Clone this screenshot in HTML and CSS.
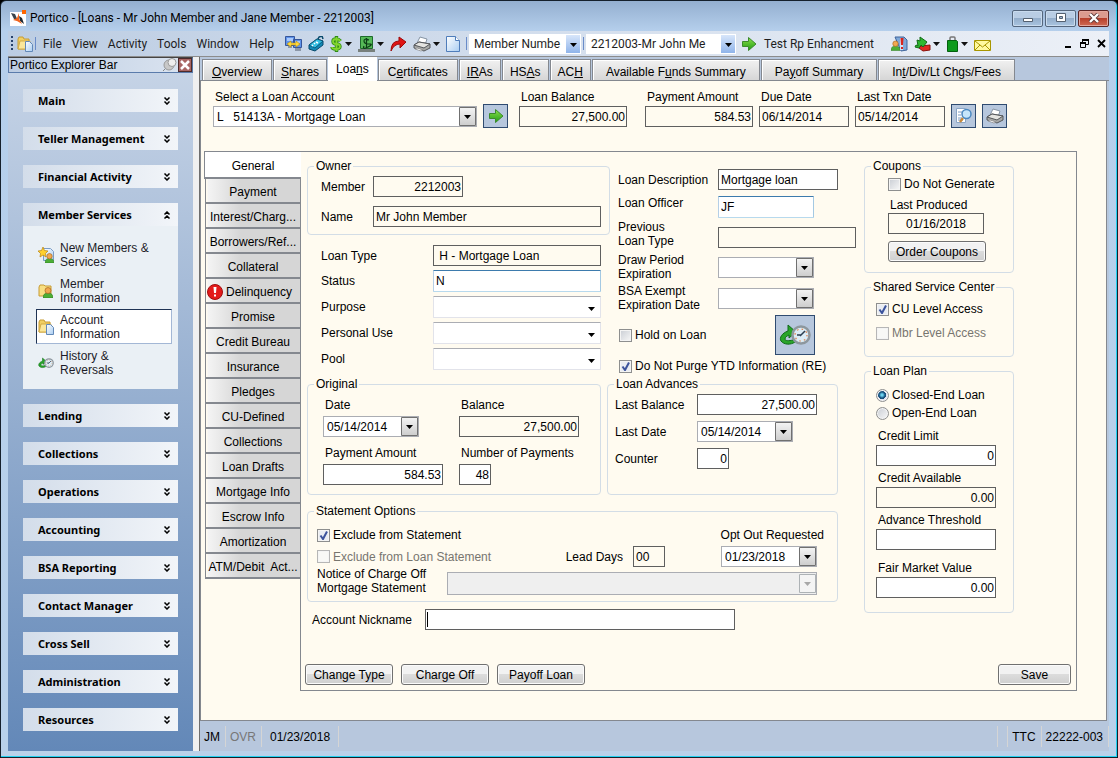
FILE: index.html
```html
<!DOCTYPE html>
<html lang="en">
<head>
    <meta charset="utf-8">
    <title>Portico - Loans</title>
    <link rel="stylesheet" href="styles.css">
</head>
<body>
    <!-- shared icons -->
    <svg class="defs" width="0" height="0" aria-hidden="true">
        <linearGradient id="green" x1="0" y1="0" x2="0" y2="1">
            <stop offset="0" stop-color="#8be04a"/>
            <stop offset="1" stop-color="#1f9c14"/>
        </linearGradient>
        <linearGradient id="paper" x1="0" y1="0" x2="1" y2="1">
            <stop offset="0" stop-color="#ffffff"/>
            <stop offset="1" stop-color="#a9cdf2"/>
        </linearGradient>
        <symbol id="folder" viewBox="0 0 16 16">
            <path d="M1 3l1-2h4l1 2h5v10H1z" fill="#f0cf62" stroke="#c79c35"/>
            <path d="M1 13L3 5h10l-2 8z" fill="#fbe79a" stroke="#d4ab45"/>
            <path d="M8.500 5.500h4l3 3v7h-7z" fill="url(#paper)" stroke="#6289b8"/>
        </symbol>
        <symbol id="go" viewBox="0 0 16 16">
            <path d="M1.500 5.500h6v-4l7.500 6.500-7.500 6.500v-4h-6z" fill="url(#green)" stroke="#3c8a2c"/>
        </symbol>
        <symbol id="person" viewBox="0 0 10 11">
            <path d="M0 11q0-5 5-5t5 5z" fill="#4cae35" stroke="#2b7a1e" stroke-width=".6"/>
            <circle cx="5" cy="3.500" r="3" fill="#f0a850" stroke="#a8651c" stroke-width=".7"/>
        </symbol>
        <symbol id="history" viewBox="0 0 32 22">
            <path d="M9 7C3 9 0 14 2 17c3 4 10 4 14 1l-2-2c-4 1-8 1-8-1s2-3 4-4v3l7-6-8-7z" fill="#2aa52a" stroke="#0f6a18"/>
            <circle cx="22" cy="11" r="8.500" fill="#dcecf5" stroke="#8d979e" stroke-width="2.500"/>
            <circle cx="22" cy="11" r="6" fill="none" stroke="#e07a40" stroke-width="1.200" stroke-dasharray="1.500 3.200"/>
            <path d="M21 12l5-5M22 11h-4" stroke="#2b3e50" stroke-width="1.500"/>
        </symbol>
        <symbol id="printer" viewBox="0 0 18 16">
            <path d="M4 7l3-6 7 2-2 6z" fill="#fff" stroke="#8694a4"/>
            <path d="M1 9l5-3 11 2v4l-6 3-10-3z" fill="#a9aaa8" stroke="#55585c"/>
            <path d="M1 9l5-3 11 2-6 4z" fill="#e4e4e1" stroke="#55585c"/>
            <path d="M4 12l6 2-2 1-6-2z" fill="#fff" stroke="#777" stroke-width=".6"/>
        </symbol>
        <symbol id="down" viewBox="0 0 7 4"><path d="M0 0h7L3.500 4z" fill="#111"/></symbol>
        <symbol id="chevrons" viewBox="0 0 8 8">
            <path d="M1.500 .5L4 3 6.500 .5M1.500 4.500L4 7l2.500-2.500" fill="none" stroke="#000" stroke-width="1.500"/>
        </symbol>
    </svg>

    <div class="window">
        <div class="titlebar">
            <svg width="16" height="16" viewBox="0 0 16 16">
                <path d="M0 2h16v14H0z" fill="#fff"/>
                <path d="M1 3l4 1 3 7-4-2z" fill="#39434c"/>
                <path d="M9 6l3 2 2 6-4-3z" fill="#202a33"/>
                <path d="M9 3v6l3 5-5-3-4-1 4-2z" fill="#f1631c"/>
                <path d="M12 0h4v4h-4z" fill="#f60"/>
            </svg>
            <h1>Portico - [Loans - Mr John Member and Jane Member - 2212003]</h1>
            <div class="win-buttons">
                <button type="button" aria-label="Minimize"><svg width="12" height="10" viewBox="0 0 12 10"><path d="M1.500 5.500h9v3h-9z" fill="#fff" stroke="#536070"/></svg></button>
                <button type="button" aria-label="Maximize"><svg width="12" height="10" viewBox="0 0 12 10"><path d="M1.500 .5h9v8h-9z" fill="#fff" stroke="#536070"/><path d="M4.500 3.500h3v2h-3z" fill="#9fb6d0" stroke="#536070"/></svg></button>
                <button type="button" class="close" aria-label="Close"><svg width="12" height="10" viewBox="0 0 12 10"><path d="M2 1l8 8M10 1L2 9" stroke="#5b3535" stroke-width="4"/><path d="M2 1l8 8M10 1L2 9" stroke="#fff" stroke-width="2.400"/></svg></button>
            </div>
        </div>

        <div class="toolbar">
            <span class="grip"></span>
            <svg width="16" height="16"><use href="#folder"/></svg>
            <span class="sep"></span>
            <nav class="menu">
                <button type="button">File</button>
                <button type="button">View</button>
                <button type="button">Activity</button>
                <button type="button">Tools</button>
                <button type="button">Window</button>
                <button type="button">Help</button>
            </nav>
            <div class="tools">
                <button type="button" aria-label="Transfer"><svg width="17" height="16" viewBox="0 0 17 16">
                    <path d="M.5 .5h9v9h-9zM8.500 3.500h8v8h-8z" fill="#5f93ea" stroke="#36569b"/>
                    <path d="M2 2h6v3H2zM10 5h5v2h-5z" fill="#a9c9fb"/>
                    <path d="M3 10h4v2H3zM10 12h6v3h-6z" fill="#8b97a8"/>
                    <path d="M2 8l4-3v2h5V5l4 3-4 3V9H6v2z" fill="#ffd93b" stroke="#b98d0c" stroke-width=".6"/>
                </svg></button>
                <button type="button" aria-label="Calculator"><svg width="16" height="16" viewBox="0 0 16 16">
                    <path d="M1 9l8-6 6 2v4l-8 6-6-2z" fill="#1389b5" stroke="#08496a"/>
                    <path d="M1 9l8-6 6 2-8 7z" fill="#35bfe2" stroke="#08496a" stroke-width=".8"/>
                    <path d="M4 9l1 1M6 7l1 1M8 6l2 1" stroke="#fff" stroke-width="1.500"/>
                    <path d="M10 3l1-2 3-1 1 3" fill="none" stroke="#08496a" stroke-width="1.500"/>
                </svg></button>
                <button type="button" class="drop" aria-label="Money"><svg width="13" height="16" viewBox="0 0 13 16">
                    <path d="M10.500 5Q9 3 6 3T3 5.500t3.500 2.500T10 10.500 6 13 2 11M6.500 0v16" fill="none" stroke="#2d8a17" stroke-width="3.400"/>
                    <path d="M10.500 5Q9 3 6 3T3 5.500t3.500 2.500T10 10.500 6 13 2 11M6.500 1v14" fill="none" stroke="#83d52f" stroke-width="1.800"/>
                </svg><svg width="7" height="4"><use href="#down"/></svg></button>
                <button type="button" class="drop" aria-label="Cash"><svg width="17" height="16" viewBox="0 0 17 16">
                    <path d="M2.500 .5h12v12h-12z" fill="#55b957" stroke="#1e6b2b"/>
                    <path d="M0 13h17v3H0z" fill="#78807d"/>
                    <path d="M11 4Q6 2 6 5t5 3-1 3-4-1M8.500 2v10" fill="none" stroke="#0b3c15" stroke-width="1.200"/>
                </svg><svg width="7" height="4"><use href="#down"/></svg></button>
                <button type="button" aria-label="Forward"><svg width="17" height="16" viewBox="0 0 17 16">
                    <path d="M1 15Q1 5 9 5V1l7 5-6 6V8Q4 8 1 15z" fill="#e01414" stroke="#9c0a0a"/>
                </svg></button>
                <button type="button" class="drop" aria-label="Print"><svg width="18" height="16"><use href="#printer"/></svg><svg width="7" height="4"><use href="#down"/></svg></button>
                <button type="button" aria-label="New"><svg width="14" height="16" viewBox="0 0 14 16">
                    <path d="M.5 .5h9l4 4v11H.5z" fill="url(#paper)" stroke="#4f7dbb"/>
                    <path d="M9.500 .5v4h4" fill="#fff" stroke="#4f7dbb"/>
                </svg></button>
            </div>
            <span class="sep"></span>
            <select class="tool-select kind" aria-label="Search by"><option>Member Numbe</option></select>
            <span class="sep"></span>
            <select class="tool-select member" aria-label="Member"><option>2212003-Mr John Me</option></select>
            <button type="button" class="test"><svg width="16" height="16"><use href="#go"/></svg>Test Rp Enhancment</button>
            <div class="tools tools-end">
                <button type="button" aria-label="Alerts"><svg width="17" height="16" viewBox="0 0 17 16">
                    <path d="M4 1h9l3 3v10l-6 1z" fill="#7fa8d8" stroke="#41659b"/>
                    <path d="M9 2h3v12H9z" fill="#cfe0f5"/>
                    <path d="M9.500 2h3l-.5 7h-2zM10 11h2v2h-2z" fill="#d9261c"/>
                    <use href="#person" x="0" y="3" width="9" height="13"/>
                </svg></button>
                <button type="button" class="drop" aria-label="Exchange"><svg width="17" height="16" viewBox="0 0 17 16">
                    <path d="M5 12l2-2 9-1v5l-7 1z" fill="#df2a22" stroke="#8c120c"/>
                    <path d="M1 11l1-2 2 1-1-6 3 1V1l7 5-4 5-2-2-2 3z" fill="#2fb82f" stroke="#126a16"/>
                </svg><svg width="7" height="4"><use href="#down"/></svg></button>
                <button type="button" class="drop" aria-label="Bag"><svg width="13" height="16" viewBox="0 0 13 16">
                    <path d="M4 5V2q0-1 1-1h3q1 0 1 1v3" fill="none" stroke="#777" stroke-width="1.500"/>
                    <path d="M1.500 4.500h9l1 1v10h-10z" fill="#0c9a1c" stroke="#04600e"/>
                </svg><svg width="7" height="4"><use href="#down"/></svg></button>
                <button type="button" aria-label="Mail"><svg width="17" height="16" viewBox="0 0 17 16">
                    <path d="M.5 4.500h16v10H.5z" fill="#fff9a0" stroke="#a89600"/>
                    <path d="M1 5l7.500 6L16 5M1 14l5-5M16 14l-5-5" fill="none" stroke="#a89600"/>
                </svg></button>
            </div>
            <div class="child-buttons">
                <button type="button" aria-label="Minimize form"><svg width="7" height="9" viewBox="0 0 7 9"><path d="M0 7h6v2H0z"/></svg></button>
                <button type="button" aria-label="Restore form"><svg width="9" height="9" viewBox="0 0 9 9"><path d="M2.500 3V1h6v4.500H6M.5 4h5v4.500h-5z" fill="none" stroke="#000"/><path d="M2 1h7M0 4h6" stroke="#000" stroke-width="2"/></svg></button>
                <button type="button" aria-label="Close form"><svg width="9" height="9" viewBox="0 0 9 9"><path d="M1 1l7 7M8 1L1 8" stroke="#000" stroke-width="1.800"/></svg></button>
            </div>
        </div>

        <div class="client">
            <!-- explorer bar -->
            <div class="explorer">
                <div class="explorer-head">
                    <h2>Portico Explorer Bar</h2>
                    <svg width="15" height="14" viewBox="0 0 15 14">
                        <path d="M1 13l5-5" stroke="#888"/>
                        <ellipse cx="7" cy="7" rx="5" ry="5" fill="#c8c8c8" stroke="#999"/>
                        <ellipse cx="10" cy="4.500" rx="4" ry="4" fill="#eee" stroke="#999"/>
                    </svg>
                    <button type="button" aria-label="Close bar"><svg width="10" height="10" viewBox="0 0 10 10"><path d="M1 1l8 8M9 1L1 9" stroke="#fff" stroke-width="2.500"/></svg></button>
                </div>
                <div class="sections">
                    <button type="button" class="section">Main<svg width="8" height="8"><use href="#chevrons"/></svg></button>
                    <button type="button" class="section">Teller Management<svg width="8" height="8"><use href="#chevrons"/></svg></button>
                    <button type="button" class="section">Financial Activity<svg width="8" height="8"><use href="#chevrons"/></svg></button>
                    <div>
                        <button type="button" class="section open">Member Services<svg width="8" height="8"><use href="#chevrons"/></svg></button>
                        <div class="links">
                            <a href="#"><svg width="16" height="16" viewBox="0 0 16 16">
                                <path d="M5.500 1.500h7l3 3v9h-10z" fill="url(#paper)" stroke="#7b9cc5"/>
                                <path d="M5 0l1.500 3.500L10 4 7.500 6.500 8 10 5 8l-3 2 .5-3.500L0 4l3.500-.5z" fill="#ffd02e" stroke="#b98310" stroke-width=".7"/>
                                <use href="#person" x="7" y="6" width="9" height="10"/>
                            </svg><span>New Members &amp;<br>Services</span></a>
                            <a href="#"><svg width="16" height="16" viewBox="0 0 16 16">
                                <path d="M1 4l1-2h4l1 1h6v10H1z" fill="#f8df82" stroke="#c79c35"/>
                                <use href="#person" x="5" y="4" width="10" height="11"/>
                            </svg><span>Member<br>Information</span></a>
                            <a href="#" class="current"><svg width="16" height="16"><use href="#folder"/></svg><span>Account<br>Information</span></a>
                            <a href="#"><svg width="16" height="16"><use href="#history"/></svg><span>History &amp;<br>Reversals</span></a>
                        </div>
                    </div>
                    <button type="button" class="section">Lending<svg width="8" height="8"><use href="#chevrons"/></svg></button>
                    <button type="button" class="section">Collections<svg width="8" height="8"><use href="#chevrons"/></svg></button>
                    <button type="button" class="section">Operations<svg width="8" height="8"><use href="#chevrons"/></svg></button>
                    <button type="button" class="section">Accounting<svg width="8" height="8"><use href="#chevrons"/></svg></button>
                    <button type="button" class="section">BSA Reporting<svg width="8" height="8"><use href="#chevrons"/></svg></button>
                    <button type="button" class="section">Contact Manager<svg width="8" height="8"><use href="#chevrons"/></svg></button>
                    <button type="button" class="section">Cross Sell<svg width="8" height="8"><use href="#chevrons"/></svg></button>
                    <button type="button" class="section">Administration<svg width="8" height="8"><use href="#chevrons"/></svg></button>
                    <button type="button" class="section">Resources<svg width="8" height="8"><use href="#chevrons"/></svg></button>
                </div>
            </div>

            <main class="main">
                <div class="tabs">
                    <button type="button"><u>O</u>verview</button>
                    <button type="button" class="narrow"><u>S</u>hares</button>
                    <button type="button" class="active">Loa<u>n</u>s</button>
                    <button type="button">C<u>e</u>rtificates</button>
                    <button type="button" class="narrow"><u>I</u><u>R</u>As</button>
                    <button type="button" class="narrow">HS<u>A</u>s</button>
                    <button type="button" class="narrow">AC<u>H</u></button>
                    <button type="button" class="wide">Available F<u>u</u>nds Summary</button>
                    <button type="button" class="wide">Pa<u>y</u>off Summary</button>
                    <button type="button" class="wide">In<u>t</u>/Div/Lt Chgs/Fees</button>
                </div>

                <form class="page">
                    <div class="account">
                        <div class="field picker">
                            <label for="account">Select a Loan Account</label>
                            <select id="account"><option>L &nbsp; 51413A - Mortgage Loan</option></select>
                        </div>
                        <button type="button" class="icon-button" aria-label="Go"><svg width="16" height="16"><use href="#go"/></svg></button>
                        <div class="field amount first">
                            <label for="balance">Loan Balance</label>
                            <input id="balance" class="num" value="27,500.00" readonly>
                        </div>
                        <div class="field amount">
                            <label for="payment">Payment Amount</label>
                            <input id="payment" class="num" value="584.53" readonly>
                        </div>
                        <div class="field date">
                            <label for="due">Due Date</label>
                            <input id="due" value="06/14/2014" readonly>
                        </div>
                        <div class="field date">
                            <label for="txn">Last Txn Date</label>
                            <input id="txn" value="05/14/2014" readonly>
                        </div>
                        <button type="button" class="icon-button" aria-label="Preview"><svg width="16" height="16" viewBox="0 0 16 16">
                            <path d="M.5 .5h9v14h-9z" fill="#fff" stroke="#8aa5c6"/>
                            <path d="M2 4h4M2 7h3M2 10h4M2 12h5" stroke="#7d9cc4"/>
                            <path d="M7 10l-3 4" stroke="#c78a3c" stroke-width="2.500"/>
                            <circle cx="10.500" cy="6" r="4.500" fill="#c6e6fb" stroke="#4b88c0" stroke-width="1.500"/>
                        </svg></button>
                        <button type="button" class="icon-button" aria-label="Print"><svg width="18" height="16"><use href="#printer"/></svg></button>
                    </div>

                    <div class="detail">
                        <div class="side-tabs">
                            <button type="button" class="active">General</button>
                            <button type="button">Payment</button>
                            <button type="button">Interest/Charg...</button>
                            <button type="button">Borrowers/Ref...</button>
                            <button type="button">Collateral</button>
                            <button type="button" class="alert"><svg width="16" height="16" viewBox="0 0 16 16">
                                <circle cx="8" cy="8" r="7.500" fill="#e31b1b" stroke="#a30d0d"/>
                                <path d="M6.500 3h3L9 9H7zM7 10.500h2v2H7z" fill="#fff"/>
                            </svg>Delinquency</button>
                            <button type="button">Promise</button>
                            <button type="button">Credit Bureau</button>
                            <button type="button">Insurance</button>
                            <button type="button">Pledges</button>
                            <button type="button">CU-Defined</button>
                            <button type="button">Collections</button>
                            <button type="button">Loan Drafts</button>
                            <button type="button">Mortgage Info</button>
                            <button type="button">Escrow Info</button>
                            <button type="button">Amortization</button>
                            <button type="button">ATM/Debit&nbsp; Act...</button>
                        </div>

                        <div class="panel">
                            <div class="columns">
                                <div class="loan">
                                    <div class="top">
                                        <div class="left">
                                            <fieldset class="owner">
                                                <legend>Owner</legend>
                                                <label for="member">Member</label>
                                                <input id="member" class="num w-member" value="2212003" readonly>
                                                <label for="name">Name</label>
                                                <input id="name" value="Mr John Member" readonly>
                                            </fieldset>
                                            <div class="types">
                                                <label for="type">Loan Type</label>
                                                <input id="type" value=" H - Mortgage Loan" readonly>
                                                <label for="status">Status</label>
                                                <input id="status" class="soft" value="N">
                                                <label for="purpose">Purpose</label>
                                                <select id="purpose" class="flat"><option></option></select>
                                                <label for="use">Personal Use</label>
                                                <select id="use" class="flat"><option></option></select>
                                                <label for="pool">Pool</label>
                                                <select id="pool" class="flat"><option></option></select>
                                            </div>
                                        </div>
                                        <div class="middle">
                                            <div class="line">
                                                <label for="desc">Loan Description</label>
                                                <input id="desc" class="w-money" value="Mortgage loan">
                                            </div>
                                            <div class="line officer">
                                                <label for="officer">Loan Officer</label>
                                                <input id="officer" class="soft w-date" value="JF">
                                            </div>
                                            <div class="line previous">
                                                <label for="previous">Previous<br>Loan Type</label>
                                                <input id="previous" class="w-previous" readonly>
                                            </div>
                                            <div class="line two">
                                                <label for="draw">Draw Period<br>Expiration</label>
                                                <select id="draw" class="w-date"><option></option></select>
                                            </div>
                                            <div class="line two">
                                                <label for="bsa">BSA Exempt<br>Expiration Date</label>
                                                <select id="bsa" class="w-date"><option></option></select>
                                            </div>
                                            <div class="hold">
                                                <label class="check"><input type="checkbox">Hold on Loan</label>
                                                <button type="button" class="icon-button big" aria-label="History"><svg width="32" height="22"><use href="#history"/></svg></button>
                                            </div>
                                            <label class="check"><input type="checkbox" checked>Do Not Purge YTD Information (RE)</label>
                                        </div>
                                    </div>

                                    <div class="boxes">
                                        <fieldset class="original">
                                            <legend>Original</legend>
                                            <div class="field">
                                                <label for="odate">Date</label>
                                                <select id="odate" class="w-date"><option>05/14/2014</option></select>
                                            </div>
                                            <div class="field">
                                                <label for="obalance">Balance</label>
                                                <input id="obalance" class="num w-money" value="27,500.00" readonly>
                                            </div>
                                            <div class="field">
                                                <label for="opayment">Payment Amount</label>
                                                <input id="opayment" class="num w-money" value="584.53">
                                            </div>
                                            <div class="field">
                                                <label for="count">Number of Payments</label>
                                                <input id="count" class="num w-count" value="48">
                                            </div>
                                        </fieldset>
                                        <fieldset class="advances">
                                            <legend>Loan Advances</legend>
                                            <label for="abalance">Last Balance</label>
                                            <input id="abalance" class="num w-money" value="27,500.00">
                                            <label for="adate">Last Date</label>
                                            <select id="adate" class="w-date"><option>05/14/2014</option></select>
                                            <label for="counter">Counter</label>
                                            <input id="counter" class="num w-count" value="0">
                                        </fieldset>
                                    </div>

                                    <fieldset class="statement">
                                        <legend>Statement Options</legend>
                                        <div class="row">
                                            <label class="check"><input type="checkbox" checked>Exclude from Statement</label>
                                            <label for="optout" class="optout">Opt Out Requested</label>
                                        </div>
                                        <div class="row second">
                                            <label class="check off"><input type="checkbox" disabled>Exclude from Loan Statement</label>
                                            <label for="lead" class="lead">Lead Days</label>
                                            <input id="lead" class="w-count" value="00" readonly>
                                            <select id="optout" class="w-date"><option>01/23/2018</option></select>
                                        </div>
                                        <div class="row notice">
                                            <label for="notice">Notice of Charge Off<br>Mortgage Statement</label>
                                            <select id="notice" disabled><option></option></select>
                                        </div>
                                    </fieldset>
                                    <div class="nickname">
                                        <label for="nick">Account Nickname</label>
                                        <input id="nick" class="caret">
                                    </div>
                                </div>

                                <div class="plans">
                                    <fieldset class="coupons">
                                        <legend>Coupons</legend>
                                        <label class="check"><input type="checkbox">Do Not Generate</label>
                                        <div class="field">
                                            <label for="produced">Last Produced</label>
                                            <input id="produced" class="w-date" value="01/16/2018" readonly>
                                        </div>
                                        <button type="button" class="push">Order Coupons</button>
                                    </fieldset>
                                    <fieldset class="shared">
                                        <legend>Shared Service Center</legend>
                                        <label class="check"><input type="checkbox" checked>CU Level Access</label>
                                        <label class="check off"><input type="checkbox" disabled>Mbr Level Access</label>
                                    </fieldset>
                                    <fieldset class="plan">
                                        <legend>Loan Plan</legend>
                                        <label class="check"><input type="radio" name="plan" checked>Closed-End Loan</label>
                                        <label class="check"><input type="radio" name="plan">Open-End Loan</label>
                                        <div class="field first">
                                            <label for="limit">Credit Limit</label>
                                            <input id="limit" class="num w-money" value="0">
                                        </div>
                                        <div class="field">
                                            <label for="available">Credit Available</label>
                                            <input id="available" class="num w-money" value="0.00" readonly>
                                        </div>
                                        <div class="field">
                                            <label for="threshold">Advance Threshold</label>
                                            <input id="threshold" class="num w-money">
                                        </div>
                                        <div class="field last">
                                            <label for="market">Fair Market Value</label>
                                            <input id="market" class="num w-money" value="0.00">
                                        </div>
                                    </fieldset>
                                </div>
                            </div>

                            <div class="actions">
                                <button type="button" class="push">Change Type</button>
                                <button type="button" class="push">Charge Off</button>
                                <button type="button" class="push">Payoff Loan</button>
                                <button type="button" class="push save">Save</button>
                            </div>
                        </div>
                    </div>
                </form>

                <footer class="status">
                    <span>JM</span>
                    <span class="dim">OVR</span>
                    <span class="today">01/23/2018</span>
                    <span class="fill"></span>
                    <span></span>
                    <span>TTC</span>
                    <span>22222-003</span>
                </footer>
            </main>
        </div>
    </div>
</body>
</html>
```

FILE: styles.css
```css
* {
    box-sizing: border-box;
}
body {
    margin: 0;
    background: #000;
    color: #000;
    font: 12px/14px "Liberation Sans", Arial, sans-serif;
}
button, input, select {
    margin: 0;
    font: inherit;
    color: inherit;
    border-radius: 0;
}
button {
    padding: 0;
    border: 0;
    background: none;
    white-space: nowrap;
}
h1, h2 {
    margin: 0;
    font-weight: normal;
}
svg {
    display: block;
    flex: none;
}
.defs {
    position: absolute;
}

/* window frame */
.window {
    min-height: 100vh;
    display: flex;
    flex-direction: column;
    padding: 1px 8px 6px 7px;
    border: 1px solid #15202c;
    border-radius: 6px 6px 0 0;
    box-shadow: inset -1px -1px #21d0f0;
    background: linear-gradient(#94afd0, #b5cfec 30px, #b9d1ea);
}
.titlebar {
    height: 29px;
    display: flex;
    align-items: center;
    gap: 4px;
    padding: 3px 0 0 2px;
}
.titlebar h1 {
    flex: 1;
    font: 12px/16px Roboto, "Open Sans", sans-serif;
}
.win-buttons {
    display: flex;
    gap: 2px;
}
.win-buttons button {
    width: 31px;
    height: 17px;
    display: flex;
    align-items: center;
    justify-content: center;
    border: 1px solid #55677e;
    border-radius: 2px;
    box-shadow: inset 0 0 0 1px #c9dbee;
    background: linear-gradient(#b9cde4 50%, #94aecb 50%, #a9c4e0);
}
.win-buttons .close {
    border-color: #5c2524;
    box-shadow: inset 0 0 0 1px #e3a79d;
    background: linear-gradient(#dc9b8f 50%, #b8402c 50%, #cf6a55);
}

/* menu and tool strip */
.toolbar {
    height: 26px;
    display: flex;
    align-items: center;
    border-bottom: 1px solid #8c8c8c;
    background: linear-gradient(90deg, #bccde3, #ecf0f7);
    font: 12px/16px Roboto, "Open Sans", sans-serif;
    color: #1e1e1e;
}
.grip {
    width: 2px;
    height: 15px;
    margin: 0 4px 0 3px;
    background: repeating-linear-gradient(#27416b 0 2px, transparent 2px 4px);
}
.sep {
    width: 1px;
    height: 13px;
    margin: 0 2px;
    background: #6a8cc9;
}
.menu {
    display: flex;
}
.menu button {
    padding: 0 5px;
}
.tools {
    display: flex;
    align-items: center;
    gap: 6px;
    margin: 0 4px 0 6px;
}
.drop {
    display: flex;
    align-items: center;
    gap: 2px;
}
.tools-end {
    margin-left: 17px;
}
.tool-select {
    appearance: none;
    height: 20px;
    padding: 0 18px 0 4px;
    border: 1px solid #fff;
    background: #fff url("data:image/svg+xml,%3Csvg xmlns='http://www.w3.org/2000/svg' width='14' height='18'%3E%3ClinearGradient id='g' x1='0' y1='0' x2='0' y2='1'%3E%3Cstop stop-color='%23d8e6fa'/%3E%3Cstop offset='1' stop-color='%238fb4ea'/%3E%3C/linearGradient%3E%3Cpath d='M0 0h14v18H0z' fill='url(%23g)'/%3E%3Cpath d='M4 8h7l-3.500 4z'/%3E%3C/svg%3E") no-repeat right center;
}
.kind {
    width: 112px;
}
.member {
    width: 150px;
}
.test {
    display: flex;
    align-items: center;
    gap: 7px;
    margin-left: 5px;
}
.child-buttons {
    display: flex;
    gap: 8px;
    margin: 0 3px 0 auto;
}

.client {
    flex: 1;
    display: flex;
    gap: 6px;
    background: #f0f0f0;
}

/* explorer bar */
.explorer {
    width: 185px;
    flex: none;
    display: flex;
    flex-direction: column;
}
.explorer-head {
    height: 16px;
    display: flex;
    align-items: center;
    gap: 1px;
    padding-left: 1px;
    border: 1px solid #5a7bab;
    border-top-color: #444;
    background: linear-gradient(90deg, #bccce2, #dbe4f0);
}
.explorer-head h2 {
    flex: 1;
    font-size: 12px;
}
.explorer-head button {
    width: 14px;
    height: 14px;
    display: flex;
    align-items: center;
    justify-content: center;
    border: 1px solid #4c2a2a;
    background: #a86563;
}
.sections {
    flex: 1;
    display: flex;
    flex-direction: column;
    gap: 15px;
    padding: 16px 15px 18px;
    background: linear-gradient(#c5d3e6, #6388b8);
}
.section {
    width: 100%;
    height: 23px;
    display: flex;
    align-items: center;
    justify-content: space-between;
    padding: 0 7px 0 15px;
    background: linear-gradient(90deg, #d3ddea, #f2f5f9);
    font: bold 11px/14px "Noto Sans", "Open Sans", sans-serif;
}
.open svg {
    transform: rotate(180deg);
}
.links {
    display: grid;
    gap: 1px;
    padding: 11px 6px 9px 13px;
    background: #eaf0f5;
}
.links a {
    height: 35px;
    display: flex;
    align-items: center;
    gap: 6px;
    padding-left: 1px;
    border: 1px solid transparent;
    color: #1c1c28;
    text-decoration: none;
}
.links .current {
    border-color: #1f3354 #a3b7d5 #a3b7d5 #1f3354;
    background: #fff;
}

/* top tabs */
.main {
    flex: 1;
    min-width: 0;
    display: flex;
    flex-direction: column;
    border-left: 1px solid #6e6e6e;
    background: #b7c7dd;
}
.tabs {
    height: 24px;
    display: flex;
    align-items: flex-end;
    gap: 1px;
    padding-left: 2px;
    border-bottom: 1px solid #84888f;
}
.tabs button {
    height: 21px;
    padding: 3px 9px 0;
    border: 1px solid #84888f;
    border-bottom: 0;
    box-shadow: inset 1px 1px #fff;
    background: linear-gradient(#f1f1f1, #d6d6d6);
}
.tabs .narrow {
    padding: 3px 7px 0;
}
.tabs .wide {
    padding: 3px 13px 0;
}
.tabs .active {
    height: 24px;
    margin-bottom: -1px;
    padding: 0 8px;
    border: 0;
    background: #fff;
}

/* page */
.page {
    flex: 1;
    display: flex;
    flex-direction: column;
    margin-right: 2px;
    padding: 9px 29px 29px 3px;
    border: 1px solid #84888f;
    border-top: 0;
    background: #fffbf0;
}
input, select {
    height: 21px;
    padding: 0 2px;
    border: 1px solid #5f5f5f;
    background: #fff;
    outline: 0;
}
input:read-only {
    background: #fffbf0;
}
.num {
    padding: 0 1px;
    text-align: right;
}
select {
    appearance: none;
    padding: 0 18px 0 3px;
    border-color: #abadb3;
    background: #fff url("data:image/svg+xml,%3Csvg xmlns='http://www.w3.org/2000/svg' width='17' height='19'%3E%3ClinearGradient id='g' x1='0' y1='0' x2='0' y2='1'%3E%3Cstop stop-color='%23f4f4f4'/%3E%3Cstop offset='1' stop-color='%23cdcdcd'/%3E%3C/linearGradient%3E%3Cpath d='M.5 .5h16v18H.5z' fill='url(%23g)' stroke='%23707070'/%3E%3Cpath d='M5 8h7l-3.500 4z'/%3E%3C/svg%3E") no-repeat right center;
}
select:disabled {
    opacity: 1;
    background: #efefef url("data:image/svg+xml,%3Csvg xmlns='http://www.w3.org/2000/svg' width='17' height='19'%3E%3Cpath d='M.5 .5h16v18H.5z' fill='%23f4f4f4' stroke='%23adb2b5'/%3E%3Cpath d='M5 8h7l-3.500 4z' fill='%23a8a8a8'/%3E%3C/svg%3E") no-repeat right center;
}
.flat, .soft {
    height: 22px;
    border: 1px solid #e2e3ea;
    border-top-color: #abadb3;
    border-radius: 1px;
}
.flat {
    background: #fff url("data:image/svg+xml,%3Csvg xmlns='http://www.w3.org/2000/svg' width='12' height='19'%3E%3Cpath d='M0 9h7l-3.500 4z'/%3E%3C/svg%3E") no-repeat right center;
}
.soft {
    border-color: #3d7bad #a4c9e3 #b7d9ed #b5cfe7;
}
.caret {
    background: linear-gradient(#000, #000) 1px 2px / 1px 15px no-repeat #fff;
}
.w-date {
    width: 96px;
}
.w-money {
    width: 120px;
}
.w-count {
    width: 32px;
}
.w-member {
    width: 90px;
}
.w-previous {
    width: 138px;
}
.field {
    display: grid;
    gap: 2px;
}
.field label {
    padding-left: 2px;
}

.check {
    height: 16px;
    display: flex;
    align-items: center;
    gap: 3px;
    white-space: nowrap;
}
.check input {
    appearance: none;
    flex: none;
    width: 13px;
    height: 13px;
    padding: 0;
    border: 1px solid #8e8f8f;
    box-shadow: inset 0 0 0 1px #f4f4f4;
    background: linear-gradient(135deg, #c9cdd4, #f8f8f8);
}
.check input[type=checkbox]:checked {
    background: #e9ecf2 url("data:image/svg+xml,%3Csvg xmlns='http://www.w3.org/2000/svg' width='11' height='11'%3E%3Cpath d='M2.500 5.500l2.500 3.500 4-7.500' fill='none' stroke='%233c539c' stroke-width='2'/%3E%3C/svg%3E") center no-repeat;
}
.check input[type=radio] {
    border-radius: 50%;
}
.check input[type=radio]:checked {
    background: radial-gradient(circle at 5px 5px, #6ad0ee 0 1px, #17507d 3px, #17507d 4px, #dde 4px);
}
.off {
    color: #77756f;
}
.check input:disabled {
    border-color: #b6b6b6;
    background: #f8f8f6;
}

.account {
    display: flex;
    align-items: flex-end;
    gap: 6px;
    height: 38px;
    padding-left: 9px;
}
.account .field {
    padding-bottom: 1px;
}
.account input, .account select {
    width: 100%;
}
.account .picker {
    width: 264px;
}
.account .amount {
    width: 108px;
    margin-right: 12px;
}
.account .amount + .date {
    margin-left: -12px;
}
.account .first {
    margin-left: 5px;
}
.account .date {
    width: 90px;
}
.icon-button {
    width: 25px;
    height: 24px;
    display: flex;
    align-items: center;
    justify-content: center;
    border: 1px solid #2f4b70;
    background: #b7c7dd;
}
.big {
    width: 40px;
    height: 40px;
}

/* detail with vertical tabs */
.detail {
    flex: 1;
    display: flex;
    margin-top: 23px;
}
.side-tabs {
    width: 97px;
    flex: none;
    display: flex;
    flex-direction: column;
    margin-right: -1px;
    position: relative;
}
.side-tabs button {
    height: 25px;
    margin: 0 1px 0 1px;
    padding-top: 2px;
    border-bottom: 2px solid #84888f;
    border-left: 1px solid #84888f;
    background: linear-gradient(90deg, #fffbf0 1px, #f4f4f4 2px, #d6d6d6 35px);
}
.side-tabs .active {
    height: 28px;
    margin: 0;
    border-top: 1px solid #84888f;
    background: #fff;
}
.side-tabs .alert {
    display: flex;
    align-items: center;
    gap: 3px;
    padding-left: 1px;
}
.panel {
    flex: 1;
    display: flex;
    flex-direction: column;
    justify-content: space-between;
    padding: 7px 5px 5px 4px;
    border: 1px solid #84888f;
}
.columns {
    display: flex;
    gap: 26px;
    padding-left: 2px;
}
.loan {
    width: 531px;
}
.top {
    display: flex;
    gap: 8px;
}
.left {
    width: 303px;
    flex: none;
}

/* --pad is the left padding, the legend steps back over it */
fieldset {
    --pad: 11px;
    min-width: 0;
    margin: 0;
    padding: 0 0 0 var(--pad);
    border: 1px solid #d3dde6;
    border-radius: 4px;
}
legend {
    margin-left: calc(6px - var(--pad));
    padding: 0 2px;
    line-height: 14px;
}

.owner {
    --pad: 13px;
    display: grid;
    grid-template-columns: 52px 1fr;
    align-items: center;
    row-gap: 9px;
    padding: 3px 8px 7px var(--pad);
}
.types {
    display: grid;
    grid-template-columns: 112px 168px;
    align-items: center;
    row-gap: 4px;
    padding: 10px 0 0 14px;
}
.middle {
    width: 238px;
    flex: none;
    margin: 10px -18px 0 0;
}
.line {
    display: flex;
    align-items: center;
}
.line label {
    width: 100px;
}
.officer {
    margin: 6px 0 2px;
    align-items: flex-start;
}
.previous {
    align-items: flex-end;
    margin-bottom: 5px;
}
.two {
    margin-bottom: 3px;
}
.hold {
    display: flex;
    align-items: center;
    justify-content: space-between;
    padding: 0 41px 3px 0;
}
.middle .check {
    padding-left: 1px;
}

.boxes {
    display: flex;
    gap: 6px;
    margin-top: 3px;
}
.original {
    --pad: 15px;
    width: 294px;
    display: grid;
    grid-template-columns: 120px 120px;
    gap: 9px 16px;
    padding: 7px 0 9px var(--pad);
}
.original .field {
    gap: 4px;
    justify-items: start;
}
.advances {
    --pad: 7px;
    flex: 1;
    display: grid;
    grid-template-columns: 82px 120px;
    align-content: start;
    align-items: center;
    row-gap: 6px;
    padding: 3px 0 0 var(--pad);
}

.statement {
    --pad: 9px;
    margin-top: 9px;
    padding: 9px 20px 6px var(--pad);
}
.row {
    display: flex;
    align-items: center;
    justify-content: space-between;
}
.optout {
    margin-right: -7px;
}
.second {
    margin-top: 3px;
}
.second .check {
    flex: 1;
}
.second .lead {
    margin-right: 10px;
}
.second select {
    margin-left: 56px;
}
.row.notice {
    align-items: flex-end;
}
.notice label {
    width: 130px;
}
.notice select {
    flex: 1;
    height: 23px;
}
.nickname {
    display: flex;
    align-items: center;
    padding: 7px 0 0 5px;
}
.nickname label {
    width: 113px;
}
.nickname input {
    width: 310px;
}

/* right column */
.plans {
    width: 150px;
    display: grid;
    align-content: start;
    gap: 7px;
}
.coupons {
    --pad: 23px;
    display: grid;
    justify-items: start;
    padding: 3px 0 10px var(--pad);
}
.coupons .field {
    gap: 1px;
    margin: 6px 0 7px;
}
.coupons .field input {
    text-align: center;
}
.shared {
    display: grid;
    gap: 8px;
    padding: 7px 0 15px var(--pad);
}
.plan {
    display: grid;
    gap: 2px;
    padding: 9px 0 14px var(--pad);
}
.plan .field {
    margin-top: 3px;
}
.plan .first {
    margin-top: 6px;
}
.plan .last {
    margin-top: 9px;
}

.push {
    height: 21px;
    padding: 1px 7px 0;
    border: 1px solid #707070;
    border-radius: 3px;
    box-shadow: inset 0 0 0 1px #fbfbfb;
    background: linear-gradient(#f2f2f2 50%, #dcdcdc 50%, #cfcfcf);
}
.actions {
    display: flex;
    gap: 8px;
}
.actions .push {
    min-width: 88px;
}
.actions .save {
    min-width: 73px;
    margin-left: auto;
}

/* status bar */
.status {
    height: 29px;
    display: flex;
    align-items: center;
    margin-top: 1px;
}
.status span {
    height: 21px;
    padding: 4px 5px 0 4px;
    border-right: 1px solid #d5d5d5;
}
.status .dim {
    color: #777;
}
.status .today {
    padding: 4px 8px 0;
}
.status .fill {
    flex: 1;
}
```
